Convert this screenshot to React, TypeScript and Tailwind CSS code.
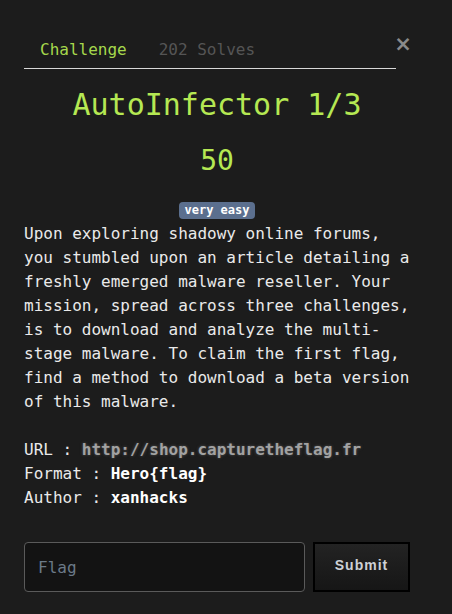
import React from "react"

const mono = "font-['DejaVu_Sans_Mono',monospace]"

export default function App() {
  return (
    <div className={`min-h-[614px] w-[452px] bg-[#1c1c1c] ${mono} text-[#e8e8e8]`}>
      <div className="mx-6 w-[386px] pt-[30px]">
        {/* Header tabs */}
        <div className="flex items-start">
          <div className="flex flex-1 border-b border-[#d8d8d8] pt-[8px] pb-[6px] text-base leading-6">
            <span className="px-4 text-[#a6d84c]">Challenge</span>
            <span className="px-4 text-[#555]">202 Solves</span>
          </div>
          <button className="mt-[4px] flex w-[14px] justify-center font-['DejaVu_Sans',sans-serif] text-[21px] leading-none font-bold text-[#8a8a8a]">
            ×
          </button>
        </div>

        {/* Title */}
        <h1 className="mt-[18px] text-center text-[30px] leading-[36px] text-[#b5e853]">AutoInfector 1/3</h1>
        <div className="mt-[21px] text-center text-[28px] leading-[34px] text-[#b5e853]">50</div>

        <div className="mt-[24px] flex justify-center">
          <span className="rounded-[4px] bg-[#5b6f8e] px-[5px] text-[12px] leading-[17px] font-bold text-white">very easy</span>
        </div>

        {/* Description */}
        <p className="mt-[3px] text-base leading-6 text-[#eaeaea]">
          Upon exploring shadowy online forums, you stumbled upon an article detailing a freshly emerged malware
          reseller. Your mission, spread across three challenges, is to download and analyze the multi-stage malware. To
          claim the first flag, find a method to download a beta version of this malware.
        </p>

        <div className="mt-6 text-base leading-6 text-[#eaeaea]">
          <div>
            URL :{" "}
            <span className="font-bold text-[#a2a2a2] [text-shadow:0_0_3px_#555]">http://shop.capturetheflag.fr</span>
          </div>
          <div>
            Format : <span className="font-bold text-white">Hero{"{flag}"}</span>
          </div>
          <div>
            Author : <span className="font-bold text-white">xanhacks</span>
          </div>
        </div>

        {/* Form */}
        <div className="mt-[32px] flex gap-2">
          <input
            placeholder="Flag"
            className={`h-[50px] w-[281px] rounded-[4px] border border-[#5a5a5a] bg-[#131313] px-[13px] text-base ${mono} text-white outline-none placeholder:text-[#6b7a88]`}
          />
          <button className="h-[50px] flex-1 border-2 border-black bg-gradient-to-b from-[#232323] to-[#161616] pb-[3px] font-['Liberation_Sans',sans-serif] text-[14px] font-bold tracking-[1px] text-[#cdd1d6]">
            Submit
          </button>
        </div>
      </div>
    </div>
  )
}
